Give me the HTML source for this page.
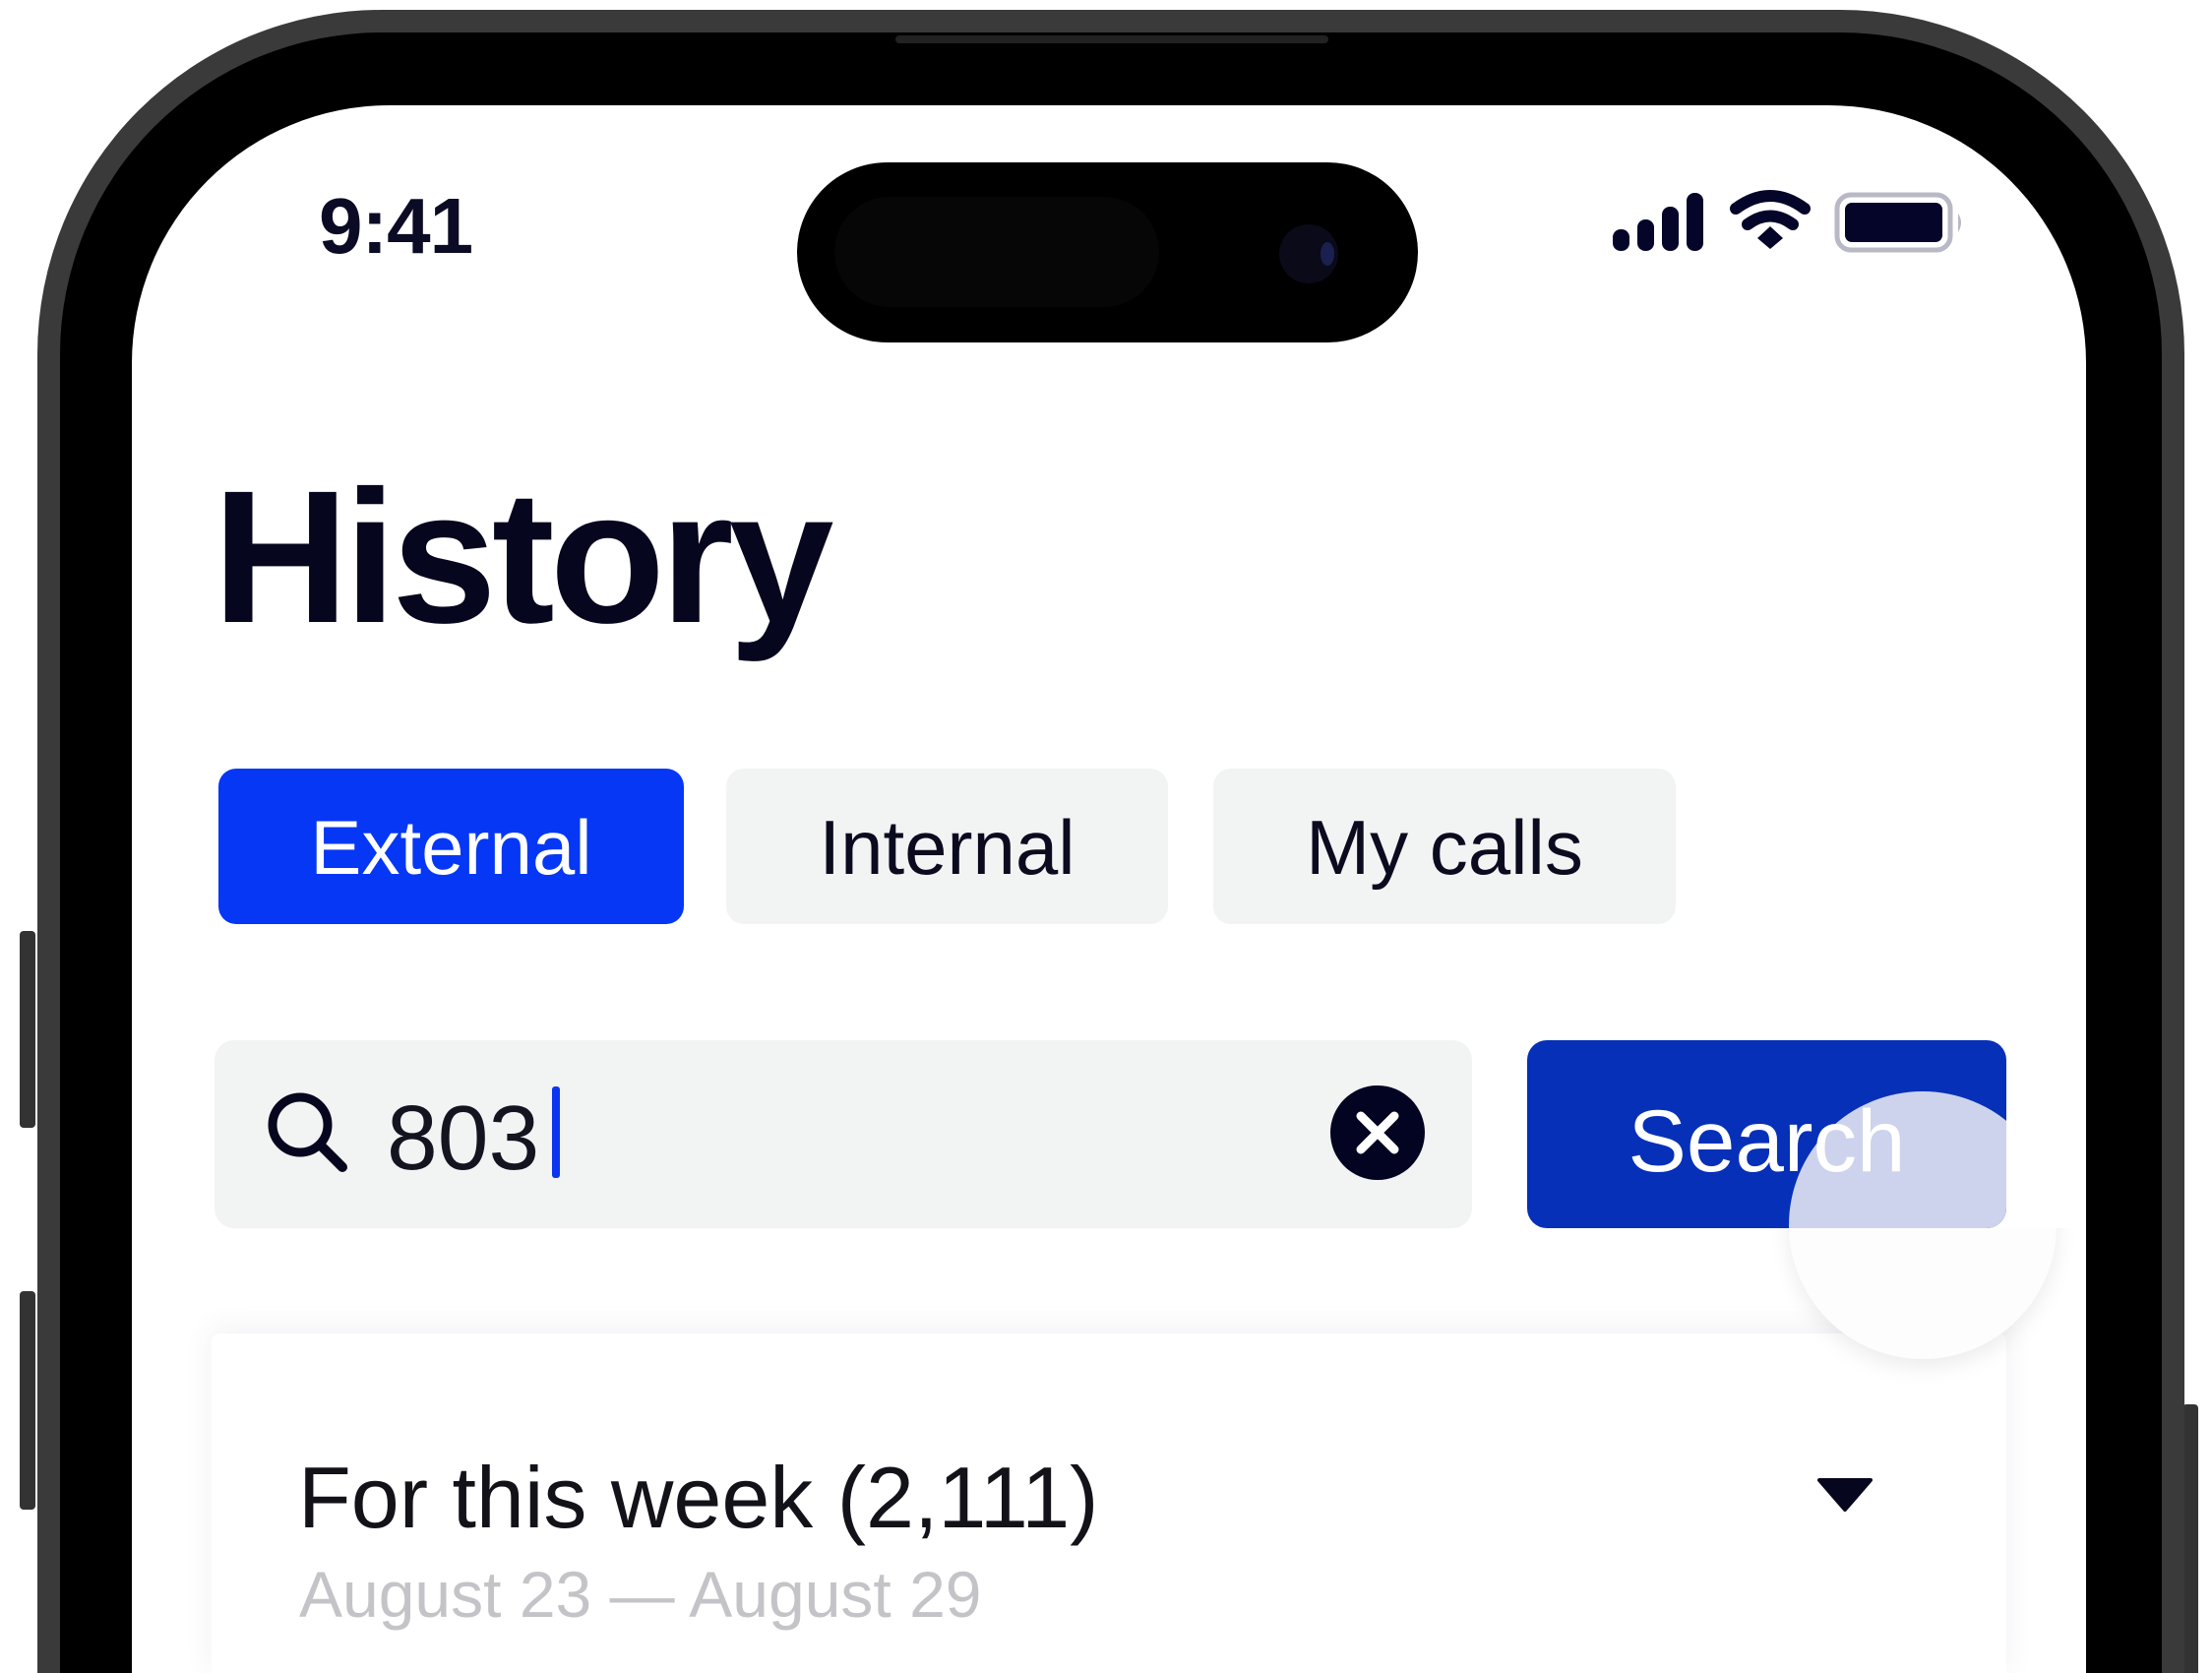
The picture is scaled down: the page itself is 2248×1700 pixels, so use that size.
<!DOCTYPE html>
<html><head><meta charset="utf-8"><style>
*{margin:0;padding:0;box-sizing:border-box}
html,body{width:2248px;height:1700px;overflow:hidden}
body{background:#fff;position:relative;font-family:"Liberation Sans",sans-serif}
#wrap{position:absolute;left:0;top:0;width:2248px;height:1700px;overflow:hidden}
.abs{position:absolute}
.frame{left:38px;top:10px;width:2182px;height:1690px;border-radius:350px 350px 0 0;background:#000;border:23px solid #3a3a3a;border-bottom:0}
.screen{left:134px;top:107px;width:1986px;height:1593px;border-radius:262px 262px 0 0;background:#fff}
.btn{background:#333;border-radius:4px}
.t{white-space:nowrap;line-height:1}
</style></head><body><div id="wrap">
<div class="abs btn" style="left:20px;top:946px;width:16px;height:200px"></div>
<div class="abs btn" style="left:20px;top:1312px;width:16px;height:222px"></div>
<div class="abs btn" style="left:2218px;top:1427px;width:16px;height:273px;border-radius:4px 4px 0 0"></div>
<div class="abs frame"></div>
<div class="abs" style="left:910px;top:36px;width:440px;height:8px;background:#222;border-radius:4px"></div>
<div class="abs screen"></div>

<div class="abs t" style="left:324px;top:190px;font-size:80px;font-weight:bold;color:#0b0b26;letter-spacing:-1px">9:41</div>
<div class="abs" style="left:810px;top:165px;width:631px;height:183px;border-radius:92px;background:#000"></div>
<div class="abs" style="left:848px;top:200px;width:330px;height:112px;border-radius:56px;background:#060606"></div>
<div class="abs" style="left:1300px;top:228px;width:60px;height:60px;border-radius:50%;background:#0a0a18"></div>
<div class="abs" style="left:1342px;top:246px;width:14px;height:24px;border-radius:50%;background:#1a2150"></div>

<svg class="abs" style="left:1630px;top:190px" width="380" height="75" viewBox="0 0 380 75">
<g fill="#05052a">
<rect x="9" y="43" width="17" height="22" rx="8"/>
<rect x="34" y="33" width="17" height="32" rx="8"/>
<rect x="59" y="20" width="17" height="45" rx="8"/>
<rect x="84" y="6" width="17" height="59" rx="8"/>
</g>
<g fill="none" stroke="#05052a" stroke-width="12" stroke-linecap="round">
<path d="M134 22 Q169 -4 204 22"/>
<path d="M146 38 Q169 21 192 38"/>
</g>
<path d="M156 52 L169 40 L182 52 L169 63Z" fill="#05052a"/>
<rect x="237" y="8" width="115" height="56" rx="14" fill="none" stroke="#b9b9c6" stroke-width="5"/>
<rect x="245" y="16" width="99" height="40" rx="7" fill="#05052a"/>
<path d="M360 27 Q366 36 360 46Z" fill="#b9b9c6"/>
</svg>

<div class="abs t" style="left:216px;top:470px;font-size:192px;font-weight:bold;color:#06061f;letter-spacing:-5px">History</div>

<div class="abs" style="left:222px;top:781px;width:473px;height:158px;border-radius:18px;background:#0537f5"></div>
<div class="abs" style="left:738px;top:781px;width:449px;height:158px;border-radius:18px;background:#f2f3f3"></div>
<div class="abs" style="left:1233px;top:781px;width:470px;height:158px;border-radius:18px;background:#f2f3f3"></div>
<div class="abs t" style="left:222px;top:822px;width:473px;text-align:center;font-size:78px;color:#fff">External</div>
<div class="abs t" style="left:738px;top:822px;width:449px;text-align:center;font-size:78px;color:#0b0b20">Internal</div>
<div class="abs t" style="left:1233px;top:822px;width:470px;text-align:center;font-size:78px;color:#0b0b20">My calls</div>

<div class="abs" style="left:218px;top:1057px;width:1278px;height:191px;border-radius:20px;background:#f2f3f3"></div>
<svg class="abs" style="left:268px;top:1106px" width="90" height="90" viewBox="0 0 90 90"><circle cx="37" cy="37" r="28" fill="none" stroke="#06061f" stroke-width="9"/><path d="M58 58 L80 80" stroke="#06061f" stroke-width="10" stroke-linecap="round"/></svg>
<div class="abs t" style="left:393px;top:1110px;font-size:93px;color:#141420">803</div>
<div class="abs" style="left:561px;top:1104px;width:8px;height:93px;background:#0b35f0;border-radius:3px"></div>
<svg class="abs" style="left:1350px;top:1103px" width="100" height="100" viewBox="0 0 100 100"><circle cx="50" cy="48" r="48" fill="#030322"/><path d="M33 31 L67 65 M67 31 L33 65" stroke="#fff" stroke-width="9" stroke-linecap="round"/></svg>

<div class="abs" style="left:215px;top:1355px;width:1824px;height:345px;background:#fff;box-shadow:0 -4px 30px rgba(60,70,120,0.08);border-radius:8px 8px 0 0"></div>

<div class="abs" style="left:1552px;top:1057px;width:487px;height:191px;border-radius:20px;background:#0630b8;overflow:hidden">
 <div class="abs" style="left:266px;top:52px;width:272px;height:272px;border-radius:50%;background:#cdd3ec"></div>
</div>
<div class="abs t" style="left:1552px;top:1115px;width:487px;text-align:center;font-size:89px;color:#fff">Search</div>
<div class="abs" style="left:1818px;top:1109px;width:272px;height:272px;border-radius:50%;clip-path:inset(139px -40px -40px -40px);background:#fdfdfd;box-shadow:0 8px 22px rgba(0,0,0,0.08)"></div>

<div class="abs t" style="left:303px;top:1478px;font-size:88px;color:#121218">For this week (2,111)</div>
<svg class="abs" style="left:1845px;top:1500px" width="60" height="38" viewBox="0 0 60 38"><path d="M4 4 L56 4 L30 34Z" fill="#06061f" stroke="#06061f" stroke-width="4" stroke-linejoin="round"/></svg>
<div class="abs t" style="left:304px;top:1587px;font-size:66px;color:#c4c4c8">August 23 — August 29</div>
</div></body></html>
